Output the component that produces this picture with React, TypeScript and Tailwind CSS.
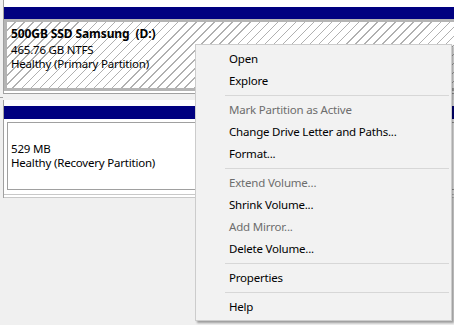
import React from 'react'

type Item = { label: string; disabled?: boolean } | 'sep'

const menu: Item[] = [
  { label: 'Open' },
  { label: 'Explore' },
  'sep',
  { label: 'Mark Partition as Active', disabled: true },
  { label: 'Change Drive Letter and Paths...' },
  { label: 'Format...' },
  'sep',
  { label: 'Extend Volume...', disabled: true },
  { label: 'Shrink Volume...' },
  { label: 'Add Mirror...', disabled: true },
  { label: 'Delete Volume...' },
  'sep',
  { label: 'Properties' },
  'sep',
  { label: 'Help' },
]

export default function App() {
  return (
    <div className="relative w-[454px] h-[325px] overflow-hidden bg-[#f0f0f0] text-[11.5px] leading-[14px] tracking-[-0.2px] text-black [font-family:'Noto_Sans',sans-serif]">
      {/* Disk 1 */}
      <div className="ml-[3px] h-[94px] border-l border-b border-[#a0a0a0] bg-white pt-[7px]">
        <div className="h-[12px] bg-[#000080]" />
        <div className="h-[72px] border-[3px] border-r-0 border-[#b4b4b4] bg-[repeating-linear-gradient(135deg,#ffffff_0px,#ffffff_5.4px,#b0b0b0_5.4px,#b0b0b0_6.4px)] pl-[4px] pt-[4px]">
          <div className="font-bold text-[12px] tracking-[-0.1px] leading-[16px]">500GB SSD Samsung&nbsp; (D:)</div>
          <div className="leading-[15px]">465.76 GB NTFS</div>
          <div>Healthy (Primary Partition)</div>
        </div>
      </div>

      {/* Disk separator */}
      <div className="h-[6px] flex items-center">
        <div className="w-[3px] h-px bg-[#a0a0a0]" />
      </div>

      {/* Disk 2 */}
      <div className="ml-[3px] h-[98px] border-l border-[#a0a0a0] bg-white pt-[6px]">
        <div className="h-[13px] bg-[#000080]" />
        <div className="ml-[3px] mt-[3px] h-[68px] border border-r-0 border-[#a0a0a0] bg-white pl-[3px] pt-[5px]">
          <div>&nbsp;</div>
          <div>529 MB</div>
          <div>Healthy (Recovery Partition)</div>
        </div>
        <div className="mt-[4px] h-px bg-[#c8c8c8]" />
        <div className="mt-[2px] h-px bg-[#c8c8c8]" />
      </div>

      {/* Context menu */}
      <div className="absolute left-[195px] top-[44px] w-[257px] h-[277px] border border-[#cccccc] bg-[#f2f2f2] pt-[3px] pb-[2px] shadow-[2px_2px_2px_rgba(0,0,0,0.35)]">
        {menu.map((item, i) =>
          item === 'sep' ? (
            <div key={i} className="h-[7px] flex items-center pl-[29px] pr-[2px]">
              <div className="h-px w-full bg-[#d7d7d7]" />
            </div>
          ) : (
            <div
              key={i}
              className={`h-[22px] flex items-center pl-[33px] ${item.disabled ? 'text-[#6d6d6d]' : 'text-black'}`}
            >
              {item.label}
            </div>
          )
        )}
      </div>
    </div>
  )
}
